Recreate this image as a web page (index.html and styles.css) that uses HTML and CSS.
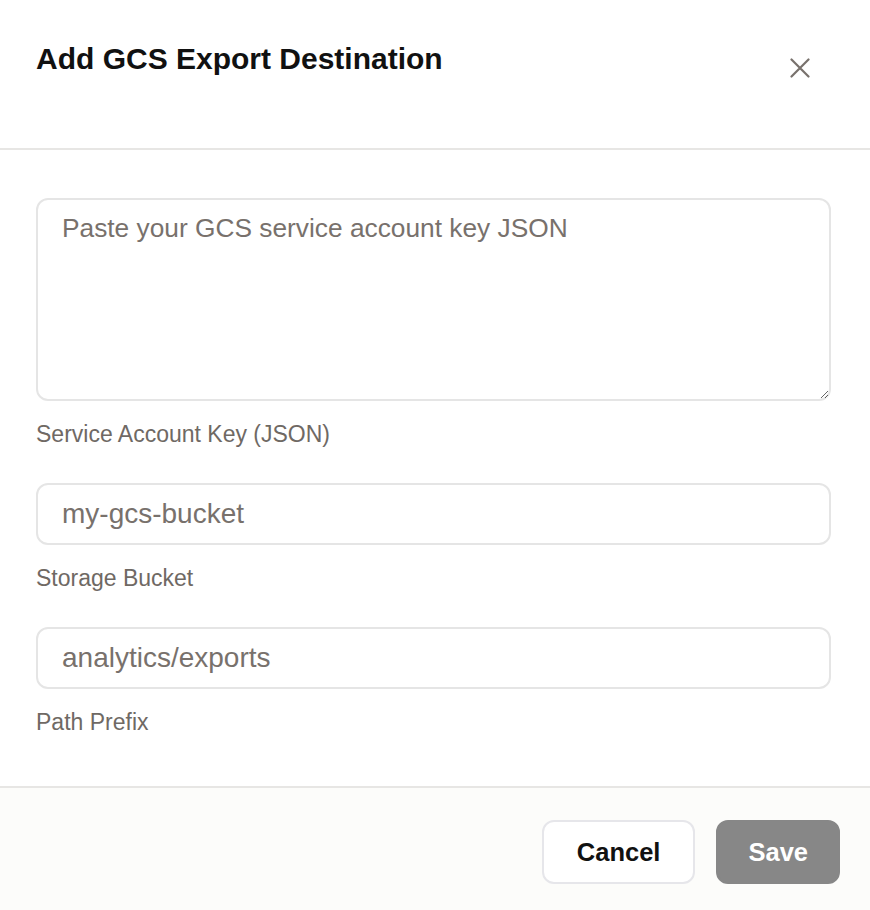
FILE: index.html
```html
<!DOCTYPE html>
<html lang="en">
<head>
<meta charset="utf-8">
<title>Add GCS Export Destination</title>
<link rel="stylesheet" href="styles.css">
</head>
<body>
<div class="modal">
  <header class="modal-header">
    <h2 class="modal-title">Add GCS Export Destination</h2>
    <button class="close-btn" aria-label="Close">
      <svg width="20" height="20" viewBox="0 0 20 20"><path d="M1.5 1.5L18.5 18.5M18.5 1.5L1.5 18.5" stroke="#78716c" stroke-width="2.2" stroke-linecap="round" fill="none"/></svg>
    </button>
  </header>
  <div class="modal-body">
    <div class="field">
      <textarea class="control textarea" placeholder="Paste your GCS service account key JSON"></textarea>
      <label class="field-label">Service Account Key (JSON)</label>
    </div>
    <div class="field">
      <input class="control input" type="text" placeholder="my-gcs-bucket">
      <label class="field-label">Storage Bucket</label>
    </div>
    <div class="field">
      <input class="control input" type="text" placeholder="analytics/exports">
      <label class="field-label">Path Prefix</label>
    </div>
  </div>
  <footer class="modal-footer">
    <button class="btn btn-cancel">Cancel</button>
    <button class="btn btn-save">Save</button>
  </footer>
</div>
</body>
</html>
```

FILE: styles.css
```css
* { box-sizing: border-box; }
html, body {
  margin: 0;
  padding: 0;
  background: #ffffff;
  font-family: "Liberation Sans", Arial, sans-serif;
}
.modal {
  width: 870px;
  height: 910px;
  display: flex;
  flex-direction: column;
  overflow: hidden;
}
.modal-header {
  height: 150px;
  border-bottom: 2px solid #e7e6e4;
  display: flex;
  justify-content: space-between;
  align-items: flex-start;
  padding: 41px 50px 0 36px;
}
.modal-title {
  margin: 0;
  font-size: 30px;
  line-height: 36px;
  font-weight: 700;
  color: #111111;
}
.close-btn {
  margin-top: 7px;
  width: 40px;
  height: 40px;
  border: 0;
  background: transparent;
  padding: 0;
  display: flex;
  align-items: center;
  justify-content: center;
}
.modal-body {
  padding: 48px 39px 50px 36px;
  display: flex;
  flex-direction: column;
  gap: 35px;
}
.field {
  display: flex;
  flex-direction: column;
}
.control {
  width: 100%;
  border: 2px solid #e5e5e5;
  border-radius: 12px;
  background: #ffffff;
  font-family: "Liberation Sans", Arial, sans-serif;
  color: #78716c;
  outline: none;
}
.control::placeholder { color: #78716c; opacity: 1; }
.textarea {
  height: 203px;
  padding: 13px 24px;
  font-size: 26.3px;
  line-height: 1.2;
  resize: vertical;
}
.input {
  height: 62px;
  padding: 0 24px;
  font-size: 28px;
}
.field-label {
  margin-top: 19px;
  font-size: 23px;
  line-height: 28px;
  color: #6f6964;
}
.modal-footer {
  flex: 1;
  border-top: 2px solid #e7e6e4;
  background: #fcfcfa;
  display: flex;
  justify-content: flex-end;
  align-items: flex-start;
  gap: 21px;
  padding: 32px 30px 0 0;
}
.btn {
  height: 64px;
  padding: 0 33px;
  border-radius: 12px;
  font-family: "Liberation Sans", Arial, sans-serif;
  font-size: 25.5px;
  font-weight: 700;
}
.btn-cancel {
  background: #ffffff;
  border: 2px solid #e6e6ea;
  color: #111111;
}
.btn-save {
  background: #878787;
  border: 2px solid #878787;
  color: #ffffff;
  padding: 0 30px;
}
```
